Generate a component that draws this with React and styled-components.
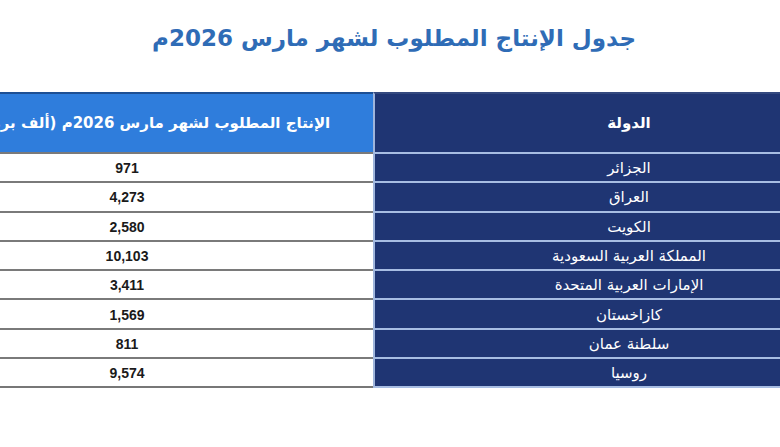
import React from 'react';
import styled, { createGlobalStyle } from 'styled-components';

const GlobalStyle = createGlobalStyle`
    html, body {
        margin: 0;
        padding: 0;
        background: #ffffff;
    }
    body {
        width: 780px;
        height: 447px;
        overflow: hidden;
        font-family: "DejaVu Sans", "Liberation Sans", sans-serif;
    }
`;

const Page = styled.div`
    width: 780px;
    height: 447px;
    overflow: hidden;
    display: flex;
    flex-direction: column;
    align-items: center;
    padding-right: 16px;
    box-sizing: border-box;
    direction: rtl;
`;

const Title = styled.h1`
    margin: 18px 0 0 0;
    padding-left: 24px;
    height: 74px;
    font-family: "DejaVu Sans", sans-serif;
    font-size: 23px;
    font-weight: bold;
    color: #2f6cb6;
    line-height: 40px;
    flex-shrink: 0;
`;

const Table = styled.div`
    width: 1002px;
    flex-shrink: 0;
    display: grid;
    grid-template-columns: 510px 492px;
`;

const HeadCell = styled.div`
    height: 60px;
    display: flex;
    align-items: center;
    justify-content: center;
    font-size: 15px;
    font-weight: bold;
    color: #ffffff;
    background: ${p => (p.$country ? '#1f3573' : '#2f7ddc')};
    border-top: 2px solid ${p => (p.$country ? '#34497f' : '#1d4f94')};
    border-left: ${p => (p.$country ? '2px solid #9fb5dc' : 'none')};
    box-sizing: border-box;
`;

const Cell = styled.div`
    display: flex;
    align-items: center;
    justify-content: center;
    box-sizing: border-box;
    height: ${p => (p.$last ? '31.3px' : '29.3px')};
    border-top: 2px solid ${p => (p.$country ? '#a7bde3' : '#7a7a7a')};
    border-bottom: ${p => (p.$last ? `2px solid ${p.$country ? '#a7bde3' : '#777777'}` : 'none')};
    border-left: ${p => (p.$country ? '2px solid #9fb5dc' : 'none')};
    background: ${p => (p.$country ? '#1f3573' : '#ffffff')};
    color: ${p => (p.$country ? '#ffffff' : '#1a1a1a')};
    font-family: ${p => (p.$country ? '"DejaVu Sans", sans-serif' : '"Liberation Sans", sans-serif')};
    font-size: ${p => (p.$country ? '15px' : '14px')};
    font-weight: ${p => (p.$country ? 'normal' : 'bold')};
    padding-top: 1px;
`;

const rows = [
    ['الجزائر', '971'],
    ['العراق', '4,273'],
    ['الكويت', '2,580'],
    ['المملكة العربية السعودية', '10,103'],
    ['الإمارات العربية المتحدة', '3,411'],
    ['كازاخستان', '1,569'],
    ['سلطنة عمان', '811'],
    ['روسيا', '9,574'],
];

const App = () => {
    return (
        <>
            <GlobalStyle />
            <Page>
                <Title>جدول الإنتاج المطلوب لشهر مارس 2026م</Title>
                <Table>
                    <HeadCell $country>الدولة</HeadCell>
                    <HeadCell>الإنتاج المطلوب لشهر مارس 2026م (ألف برميل يومياً)</HeadCell>
                    {rows.map(([country, value], i) => (
                        <React.Fragment key={country}>
                            <Cell $country $last={i === rows.length - 1}>{country}</Cell>
                            <Cell $last={i === rows.length - 1}>{value}</Cell>
                        </React.Fragment>
                    ))}
                </Table>
            </Page>
        </>
    );
};

export default App;
